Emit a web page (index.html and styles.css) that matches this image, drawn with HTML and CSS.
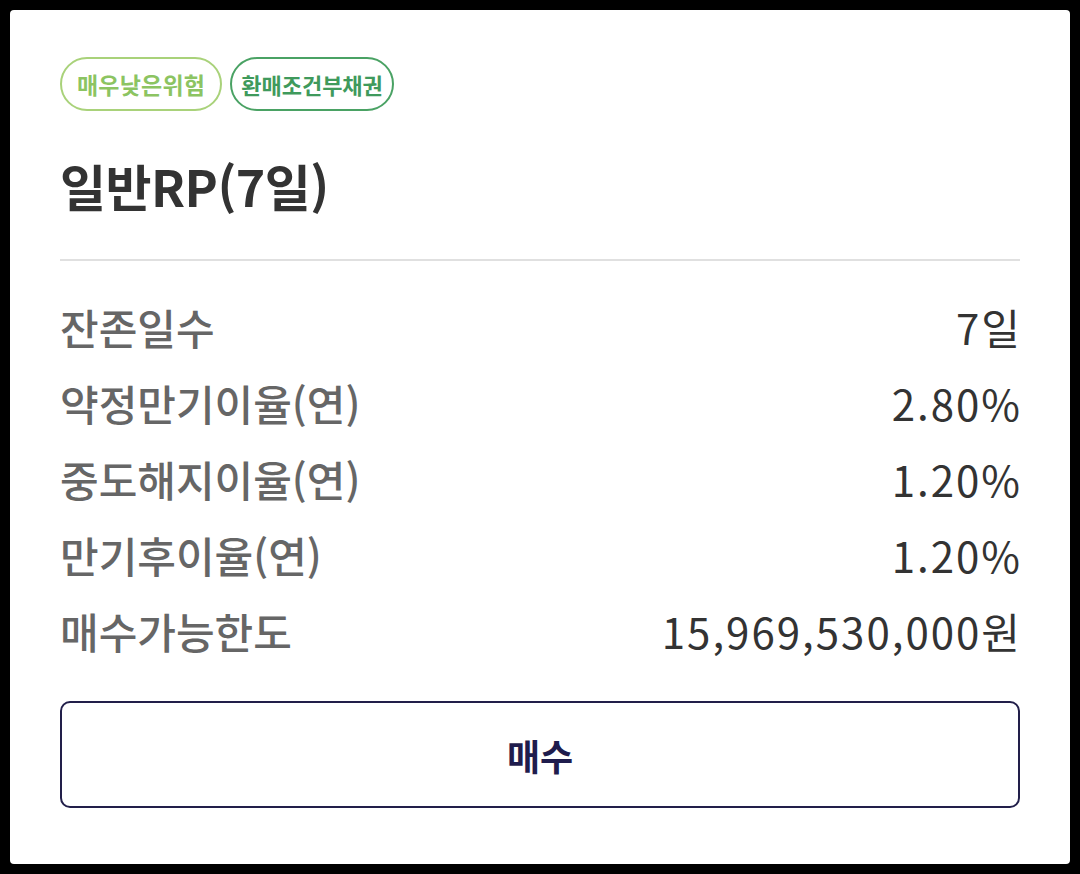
FILE: index.html
```html
<!DOCTYPE html>
<html lang="ko">
<head>
<meta charset="utf-8">
<link rel="stylesheet" href="styles.css">
</head>
<body>
<div class="card">
  <div class="badges">
    <span class="badge badge-light">매우낮은위험</span>
    <span class="badge badge-dark">환매조건부채권</span>
  </div>
  <h1 class="title">일반RP(7일)</h1>
  <div class="divider"></div>
  <dl class="rows">
    <div class="row"><dt>잔존일수</dt><dd>7일</dd></div>
    <div class="row"><dt>약정만기이율(연)</dt><dd>2.80%</dd></div>
    <div class="row"><dt>중도해지이율(연)</dt><dd>1.20%</dd></div>
    <div class="row"><dt>만기후이율(연)</dt><dd>1.20%</dd></div>
    <div class="row"><dt>매수가능한도</dt><dd>15,969,530,000원</dd></div>
  </dl>
  <button class="buy">매수</button>
</div>
</body>
</html>
```
FILE: styles.css
```css
html, body {
  margin: 0;
  padding: 0;
  background: #000;
}
body {
  padding: 10px;
  font-family: "Noto Sans CJK KR", "Noto Sans", sans-serif;
}
.card {
  background: #fff;
  border-radius: 4px;
  height: 854px;
  box-sizing: border-box;
  padding: 47px 50px 0 50px;
}
.badges {
  display: flex;
  gap: 8px;
}
.badge {
  display: inline-flex;
  align-items: center;
  height: 54px;
  box-sizing: border-box;
  padding: 0 15px;
  border: 2px solid;
  border-radius: 27px;
  font-size: 23px;
  font-weight: 700;
  letter-spacing: 0.2px;
}
.badge-light {
  border-color: #a9d27a;
  color: #8cc462;
}
.badge-dark {
  border-color: #4aa264;
  color: #3f9a5c;
  font-size: 22px;
  letter-spacing: 0;
  padding: 0 9px;
}
.title {
  margin: 42px 0 0 0;
  font-size: 50px;
  font-weight: 700;
  line-height: 64px;
  color: #333;
  letter-spacing: -0.5px;
}
.divider {
  height: 2px;
  background: #e0e0e0;
  margin-top: 42px;
}
.rows {
  margin: 27px 0 0 0;
}
.row {
  display: flex;
  justify-content: space-between;
  align-items: center;
  height: 76px;
}
.row dt {
  font-size: 42px;
  font-weight: 500;
  color: #666;
}
.row dd {
  margin: 0;
  font-size: 42px;
  font-weight: 400;
  color: #333;
  letter-spacing: 2px;
  margin-right: -2px;
}
.buy {
  display: block;
  width: 100%;
  height: 107px;
  margin-top: 33px;
  background: #fff;
  border: 2px solid #221f4a;
  border-radius: 10px;
  font-family: inherit;
  font-size: 36px;
  font-weight: 700;
  color: #1f1c4d;
}
```
